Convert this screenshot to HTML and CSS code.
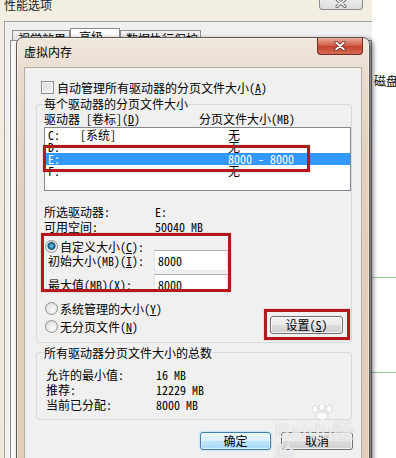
FILE: index.html
```html
<!DOCTYPE html>
<html>
  <head>
    <meta charset="utf-8" />
    <title>虚拟内存</title>
    <link rel="stylesheet" href="styles.css">
  </head>
  <body>
    <div class="desk">
      <section class="other-win">
        <p class="other-text">磁盘</p>
        <div class="other-rule first"></div>
        <div class="other-rule second"></div>
      </section>

      <section class="back-win">
        <header class="back-title">
          <span>性能选项</span>
          <span class="back-close">
            <svg width="14" height="10" viewBox="0 0 14 10">
              <path d="M3 1.5 L11 8.5 M11 1.5 L3 8.5" stroke="#555" stroke-width="3" stroke-linecap="round" />
              <path d="M3 1.5 L11 8.5 M11 1.5 L3 8.5" stroke="#fff" stroke-width="1.6" stroke-linecap="round" />
            </svg>
          </span>
        </header>
        <div class="back-client">
          <ul class="tabs">
            <li class="tab-one">视觉效果</li>
            <li class="tab-two active">高级</li>
            <li class="tab-three">数据执行保护</li>
          </ul>
          <div class="tab-panel"></div>
        </div>
      </section>

      <section class="dialog">
        <header class="titlebar">
          <h1>虚拟内存</h1>
          <span class="close">
            <svg width="14" height="10" viewBox="0 0 14 10">
              <path d="M3 1.5 L11 8.5 M11 1.5 L3 8.5" stroke="#4a1a14" stroke-width="3.2" stroke-linecap="round" />
              <path d="M3 1.5 L11 8.5 M11 1.5 L3 8.5" stroke="#fff" stroke-width="1.8" stroke-linecap="round" />
            </svg>
          </span>
        </header>

        <div class="client">
          <div class="check-row">
            <span class="checkbox"></span>
            <span>自动管理所有驱动器的分页文件大小(<u>A</u>)</span>
          </div>

          <div class="group drives">
            <div class="legend">每个驱动器的分页文件大小</div>

            <div class="list-head">
              <span class="head-name">驱动器 [卷标](<u>D</u>)</span>
              <span>分页文件大小(MB)</span>
            </div>

            <ul class="listbox">
              <li><span>C:</span><span>[系统]</span><span>无</span></li>
              <li><span>D:</span><span></span><span>无</span></li>
              <li class="selected"><span>E:</span><span></span><span>8000 - 8000</span></li>
              <li><span>F:</span><span></span><span>无</span></li>
            </ul>

            <div class="info">
              <span>所选驱动器:</span><span>E:</span>
              <span>可用空间:</span><span>50040 MB</span>
            </div>

            <div class="radio-row custom">
              <span class="radio checked"></span>
              <span>自定义大小(<u>C</u>):</span>
            </div>
            <div class="size-row first">
              <span class="size-label">初始大小(MB)(<u>I</u>):</span>
              <span class="textbox">8000</span>
            </div>
            <div class="size-row second">
              <span class="size-label">最大值(MB)(<u>X</u>):</span>
              <span class="textbox">8000</span>
            </div>

            <div class="options">
              <div class="option-list">
                <div class="radio-row">
                  <span class="radio"></span>
                  <span>系统管理的大小(<u>Y</u>)</span>
                </div>
                <div class="radio-row">
                  <span class="radio"></span>
                  <span>无分页文件(<u>N</u>)</span>
                </div>
              </div>
              <span class="btn set">设置(<u>S</u>)</span>
            </div>

            <div class="mark mark-row"></div>
            <div class="mark mark-size"></div>
            <div class="mark mark-set"></div>
          </div>

          <div class="group totals">
            <div class="legend">所有驱动器分页文件大小的总数</div>
            <div class="total-grid">
              <span>允许的最小值:</span><span>16 MB</span>
              <span>推荐:</span><span>12229 MB</span>
              <span>当前已分配:</span><span>8000 MB</span>
            </div>
          </div>

          <div class="buttons">
            <span class="btn default">确定</span>
            <span class="btn">取消</span>
          </div>
        </div>

        <div class="watermark">
          <svg class="paw" width="30" height="16" viewBox="0 0 30 16">
            <ellipse cx="8" cy="5" rx="3" ry="4" />
            <ellipse cx="15" cy="3" rx="3" ry="3.5" />
            <ellipse cx="22" cy="5" rx="3" ry="4" />
            <ellipse cx="15" cy="12" rx="6" ry="4" />
          </svg>
          <span class="wm-name">Baidu经验</span>
          <span class="wm-url">jingyan.baidu.com</span>
        </div>
      </section>
    </div>
  </body>
</html>
```

FILE: styles.css
```css
/* || Initial styles */

* {
  box-sizing: border-box;
}

html {
  font-family: "Noto Sans Mono CJK SC", "Noto Sans CJK SC", sans-serif;
  font-size: 12px;
}

body {
  margin: 0;
  width: 396px;
  height: 458px;
  overflow: hidden;
  background-color: #fff;
  color: #000;
}

u {
  text-decoration-thickness: 1px;
  text-underline-offset: 1px;
}

.desk {
  position: relative;
  width: 396px;
  height: 458px;
  overflow: hidden;
}

/* || Window behind, on the right */

.other-win {
  position: absolute;
  left: 372px;
  top: 0;
  width: 24px;
  height: 458px;
  background-color: #fff;
}

.other-text {
  margin: 74px 0 0 2px;
  line-height: 13px;
  white-space: nowrap;
}

.other-rule {
  height: 1px;
  background-color: #8fcf8a;
}

.other-rule.first {
  margin-top: 190px;
}

.other-rule.second {
  margin-top: 94px;
}

/* || Performance options window */

.back-win {
  position: absolute;
  left: -8px;
  top: 0;
  width: 380px;
  height: 470px;
  padding-left: 12px;
  background: linear-gradient(#f3eee2, #efe7d8);
}

.back-title {
  display: flex;
  justify-content: space-between;
  align-items: flex-start;
  height: 21px;
  line-height: 12px;
  color: #222;
}

.back-title > span:first-child {
  margin-top: -1px;
}

.back-close {
  display: flex;
  align-items: flex-end;
  justify-content: center;
  width: 44px;
  height: 18px;
  margin: -8px 9px 0 0;
  padding-bottom: 1px;
  border: 1px solid #8c8c8c;
  border-top: none;
  border-radius: 0 0 4px 4px;
  background: linear-gradient(#f4f4f4, #dedede);
}

.back-client {
  height: 460px;
  border: 1px solid #9da1a6;
  border-right: none;
  background-color: #f0f0f0;
}

.tabs {
  display: flex;
  align-items: flex-end;
  height: 18px;
  margin: 0;
  padding: 0 0 0 7px;
  list-style-type: none;
}

.tabs li {
  height: 10px;
  padding: 2px 0 0 5px;
  border: 1px solid #898c95;
  border-bottom: none;
  line-height: 12px;
  overflow: hidden;
  background: linear-gradient(#f2f2f2, #e3e3e3);
  white-space: nowrap;
}

.tabs li.active {
  height: 12px;
  padding-left: 8px;
  background: #fbfbfb;
}

.tab-one {
  width: 58px;
}

.tab-two {
  width: 50px;
}

.tab-three {
  width: 81px;
}

.tab-panel {
  height: 440px;
  margin-left: 5px;
  border: 1px solid #898c95;
  background-color: #f8f8f8;
}

/* || Virtual memory dialog */

.dialog {
  position: absolute;
  left: 16px;
  top: 37px;
  width: 354px;
  height: 440px;
  padding: 0 7px;
  border: 1px solid #5f5851;
  border-radius: 7px 7px 0 0;
  background: linear-gradient(#efe7dc, #e9dccd 40px, #e3d0be 120px, #e1cdb9);
  box-shadow: inset 0 0 0 1px rgba(255, 255, 255, 0.45), 3px 2px 5px rgba(0, 0, 0, 0.55);
}

.titlebar {
  display: flex;
  justify-content: space-between;
  align-items: flex-start;
  height: 29px;
}

.titlebar h1 {
  margin: 0;
  padding-top: 8px;
  font-size: 12px;
  font-weight: normal;
  line-height: 12px;
}

.close {
  display: flex;
  align-items: center;
  justify-content: center;
  width: 46px;
  height: 17px;
  margin-right: -1px;
  border: 1px solid #6e2a20;
  border-top: none;
  border-radius: 0 0 4px 4px;
  background: linear-gradient(#e9ab9c, #d5604a 45%, #c2412c 55%, #d66b53);
}

.client {
  height: 400px;
  padding: 0 9px 0 11px;
  border: 1px solid #b4aca1;
  background-color: #f0f0f0;
}

.check-row {
  display: flex;
  align-items: center;
  gap: 3px;
  height: 14px;
  margin-top: 12px;
  padding-left: 5px;
}

.checkbox {
  width: 13px;
  height: 13px;
  border: 1px solid #8e8f8f;
  background: linear-gradient(135deg, #d9d9d9, #f6f6f6);
  box-shadow: inset 0 0 0 1px #f4f4f4;
}

/* || Group boxes */

.group {
  position: relative;
  border: 1px solid #d5dadf;
  border-radius: 3px;
}

.legend {
  width: fit-content;
  height: 12px;
  margin-left: -1px;
  padding: 0 1px;
  line-height: 12px;
  background-color: #f0f0f0;
}

.drives {
  margin-top: 10px;
  padding: 0 0 9px 7px;
}

.drives .legend {
  margin-top: -7px;
}

.list-head {
  display: flex;
  height: 12px;
  margin-top: 3px;
  line-height: 12px;
}

.head-name {
  width: 155px;
}

.listbox {
  height: 64px;
  margin: 2px 0 0;
  padding: 1px 0 0;
  border: 1px solid #828790;
  background-color: #fff;
  list-style-type: none;
}

.listbox li {
  display: grid;
  grid-template-columns: 32px 148px auto;
  height: 12px;
  padding-left: 3px;
  line-height: 12px;
  white-space: pre;
}

.listbox li.selected {
  background-color: #3399ff;
  color: #fff;
}

.info {
  display: grid;
  grid-template-columns: 111px auto;
  margin-top: 13px;
  line-height: 15px;
}

.radio-row {
  display: flex;
  align-items: center;
  gap: 2px;
  height: 14px;
  padding-left: 1px;
}

.radio-row.custom {
  margin-top: 5px;
}

.radio {
  width: 13px;
  height: 13px;
  border: 1px solid #8e8f8f;
  border-radius: 50%;
  background: radial-gradient(circle at 60% 65%, #fbfbfb, #d6d6d6);
}

.radio.checked {
  background: radial-gradient(circle at 50% 45%, #9fdcf2 0, #2b8ab8 2px, #174b6e 3.5px, #e8e8e8 4.5px, #f8f8f8);
}

.size-row {
  display: flex;
  align-items: center;
  height: 21px;
  padding-left: 4px;
}

.size-row.first {
  margin-top: -3px;
}

.size-row.second {
  margin-top: 3px;
}

.size-label {
  width: 106px;
}

.textbox {
  width: 74px;
  height: 21px;
  padding-left: 3px;
  border: 1px solid #e2e3ea;
  border-top-color: #abadb3;
  border-bottom-color: #e3e9ef;
  background-color: #fff;
  line-height: 19px;
}

.options {
  display: flex;
  margin-top: 6px;
}

.option-list .radio-row + .radio-row {
  margin-top: 4px;
}

.totals {
  margin-top: 9px;
  padding: 0 0 7px 7px;
}

.totals .legend {
  margin-top: -6px;
}

.total-grid {
  display: grid;
  grid-template-columns: 110px auto;
  margin-top: 8px;
  padding-left: 2px;
  line-height: 15px;
}

/* || Buttons */

.btn {
  display: flex;
  align-items: center;
  justify-content: center;
  height: 18px;
  border: 1px solid #707070;
  border-radius: 3px;
  background: linear-gradient(#f2f2f2, #ebebeb 50%, #dddddd 51%, #cfcfcf);
  box-shadow: inset 0 0 0 1px rgba(255, 255, 255, 0.7);
  line-height: 12px;
}

.btn.set {
  width: 73px;
  align-self: flex-end;
  margin: 0 8px -1px auto;
}

.buttons {
  display: flex;
  justify-content: flex-end;
  gap: 10px;
  margin: 12px -1px 0 0;
}

.buttons .btn {
  width: 72px;
}

.buttons .btn.default {
  width: 71px;
  border-color: #3c7fb1;
  background: linear-gradient(#eaf6fd, #d9f0fc 50%, #bee6fd 51%, #a7d9f5);
  box-shadow: inset 0 0 0 1px rgba(255, 255, 255, 0.6), 0 0 2px #6cc4f0;
}

/* || Red marks over the shot */

.mark {
  position: absolute;
  border: 3px solid #b3181d;
  box-shadow: 0 0 1px rgba(179, 24, 29, 0.6);
  pointer-events: none;
}

.mark-row {
  left: 6px;
  top: 40px;
  width: 267px;
  height: 27px;
}

.mark-size {
  left: 4px;
  top: 128px;
  width: 190px;
  height: 59px;
}

.mark-set {
  left: 227px;
  top: 204px;
  width: 86px;
  height: 31px;
}

/* || Watermark */

.watermark {
  position: absolute;
  left: 258px;
  top: 366px;
  display: flex;
  flex-direction: column;
  align-items: center;
  color: rgba(255, 255, 255, 0.75);
  text-shadow: 0 0 1px rgba(0, 0, 0, 0.25);
  pointer-events: none;
}

.paw {
  fill: rgba(255, 255, 255, 0.75);
  stroke: rgba(0, 0, 0, 0.12);
}

.wm-name {
  font-family: "Liberation Sans", sans-serif;
  font-size: 21px;
  font-weight: bold;
  line-height: 22px;
}

.wm-url {
  font-family: "Liberation Sans", sans-serif;
  font-size: 8px;
  line-height: 9px;
}
```
